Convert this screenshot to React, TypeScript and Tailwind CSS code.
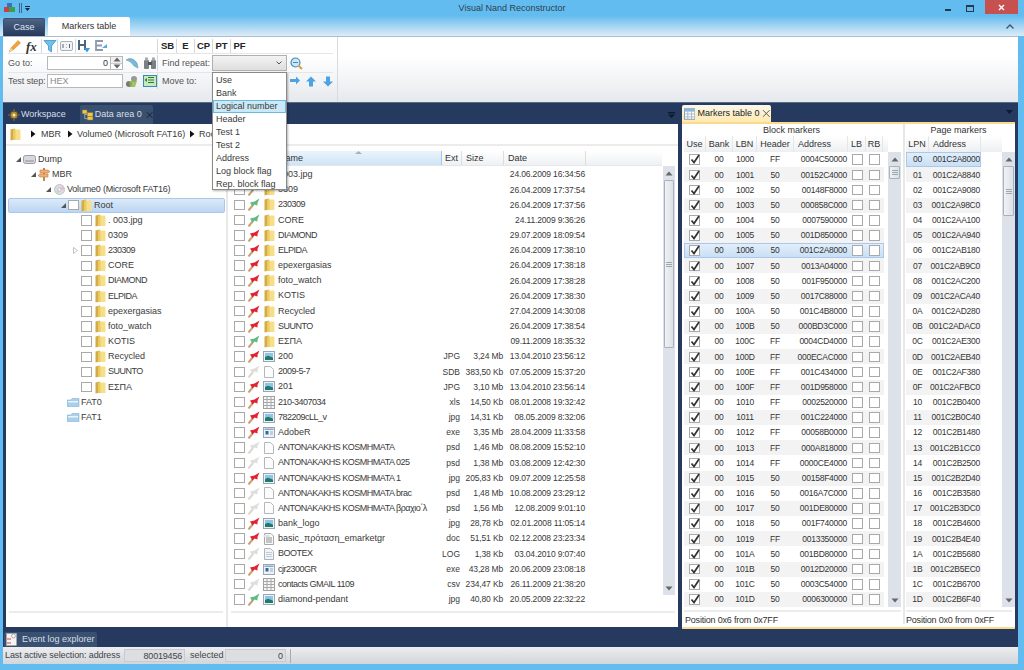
import React from "react";

type PinC = "r" | "g" | "w";
const Pin = ({ c }: { c: PinC }) => {
  const fill = c === "r" ? "#e4212f" : c === "g" ? "#5fbb82" : "#dedede";
  const st = c === "w" ? "#dcd8cc" : "#c9a070";
  return (
    <svg width="13" height="13" viewBox="0 0 13 13" className="shrink-0">
      <path d="M1.5 12.5 L6 7" stroke={st} strokeWidth="2" />
      <path d="M3 4.5 L7.5 3.5 L12.5 0.5 L10.5 5 L10.5 7.5 L7.5 6.5 L5.5 8.5 Z" fill={fill} />
    </svg>
  );
};
const Folder = () => (
  <svg width="11" height="13" viewBox="0 0 11 13" className="shrink-0">
    <path d="M0.5 1.5 L5 0.5 L5 11.5 L0.5 12.5 Z" fill="#d3ac48" />
    <rect x="3.5" y="1.5" width="7" height="10.5" rx="0.5" fill="#f7df8a" />
    <rect x="3.5" y="1.5" width="2" height="10.5" fill="#eccb60" />
  </svg>
);
const ImgIcon = () => (
  <svg width="12" height="11" viewBox="0 0 12 11" className="shrink-0">
    <rect x="0.5" y="0.5" width="11" height="10" fill="#eef2f6" stroke="#9aa6b2" />
    <rect x="2" y="2" width="8" height="4" fill="#8fc4e8" />
    <path d="M2 9 V6 L5 4.8 L10 6.5 V9 Z" fill="#1f7a6a" />
  </svg>
);
const DocIcon = () => (
  <svg width="10" height="12" viewBox="0 0 10 12" className="shrink-0">
    <path d="M0.5 0.5 H6.5 L9.5 3.5 V11.5 H0.5 Z" fill="#fcfcfc" stroke="#b4b8bc" />
  </svg>
);
const LogIcon = () => (
  <svg width="10" height="12" viewBox="0 0 10 12" className="shrink-0">
    <path d="M0.5 0.5 H6.5 L9.5 3.5 V11.5 H0.5 Z" fill="#f0f3f7" stroke="#aab4c0" />
    <path d="M2 4.5 H8 M2 6.5 H8 M2 8.5 H8" stroke="#c5ccd5" />
  </svg>
);
const WordIcon = () => (
  <svg width="12" height="12" viewBox="0 0 12 12" className="shrink-0">
    <path d="M1.5 0.5 H8 L10.5 3 V11.5 H1.5 Z" fill="#f8f8f8" stroke="#a8a8a8" />
    <path d="M3 5 H9 M3 7 H9 M3 9 H9" stroke="#909090" />
    <rect x="0.5" y="2" width="6" height="2" fill="#dde2e8" />
  </svg>
);
const SheetIcon = () => (
  <svg width="12" height="13" viewBox="0 0 12 13" className="shrink-0">
    <rect x="0.5" y="0.5" width="11" height="12" fill="#f6f6f6" stroke="#a0a0a0" />
    <path d="M0.5 3.5 H11.5 M0.5 6.5 H11.5 M0.5 9.5 H11.5 M4 0.5 V12.5 M8 0.5 V12.5" stroke="#a8a8a8" />
  </svg>
);
const ExeIcon = () => (
  <svg width="12" height="11" viewBox="0 0 12 11" className="shrink-0">
    <rect x="0.5" y="0.5" width="11" height="10" fill="#eef2f6" stroke="#9aa6b2" />
    <rect x="1.5" y="1.5" width="9" height="1.5" fill="#8aa8c8" />
    <rect x="2.5" y="4" width="3" height="3.5" fill="#2c6aa8" />
    <path d="M7 5 H10 M7 7 H10" stroke="#9ab" />
  </svg>
);
const Box = ({ on }: { on?: boolean }) => (
  <span className="relative w-[10.5px] h-[10.5px] border border-[#a9a9a9] bg-white shrink-0 block">
    {on && (
      <svg width="12" height="12" viewBox="0 0 12 12" className="absolute left-[-1px] top-[-2px]">
        <path d="M2.5 6.5 L5 9.5 L10 2" stroke="#333" strokeWidth="1.7" fill="none" />
      </svg>
    )}
  </span>
);
const Tri = () => (
  <svg width="7" height="7" viewBox="0 0 7 7" className="shrink-0">
    <path d="M6 1 V6 H1 Z" fill="#555" />
  </svg>
);
const TriR = () => (
  <svg width="6" height="8" viewBox="0 0 6 8" className="shrink-0">
    <path d="M1 0.5 L5.5 4 L1 7.5 Z" fill="#111" />
  </svg>
);
const SbUp = () => (
  <svg width="8" height="5" viewBox="0 0 8 5"><path d="M4 0.5 L7.5 4.5 H0.5 Z" fill="#666" /></svg>
);
const SbDown = () => (
  <svg width="8" height="5" viewBox="0 0 8 5"><path d="M4 4.5 L7.5 0.5 H0.5 Z" fill="#666" /></svg>
);

const Scrollbar = ({ thumbH, thumbTop, w }: { thumbH: number; thumbTop: number; w: string }) => (
  <div className={`${w} self-stretch bg-[#dde2ea] flex flex-col items-center shrink-0`}>
    <div className="h-[14px] flex items-center justify-center shrink-0"><SbUp /></div>
    <div className="flex-1 w-full relative">
      <div
        className="absolute left-[1px] right-[1px] border border-[#a8b2bf] rounded-[1px] bg-gradient-to-r from-[#f0f2f5] to-[#dde0e5] flex items-center justify-center"
        style={{ height: thumbH, top: thumbTop }}
      >
        <div className="w-[6px] h-[5px] border-y border-[#9aa] relative">
          <div className="absolute top-[1px] left-0 right-0 h-[1px] bg-[#9aa]" />
        </div>
      </div>
    </div>
    <div className="h-[14px] flex items-center justify-center shrink-0"><SbDown /></div>
  </div>
);

type F = [string, PinC, string, string, string, string];
const files: F[] = [
  [". 003.jpg", "g", "f", "", "", "24.06.2009 16:34:56"],
  ["0309", "g", "f", "", "", "26.04.2009 17:37:54"],
  ["230309", "g", "f", "", "", "26.04.2009 17:37:56"],
  ["CORE", "g", "f", "", "", "24.11.2009 9:36:26"],
  ["DIAMOND", "r", "f", "", "", "29.07.2009 18:09:54"],
  ["ELPIDA", "r", "f", "", "", "26.04.2009 17:38:10"],
  ["epexergasias", "r", "f", "", "", "26.04.2009 17:38:18"],
  ["foto_watch", "r", "f", "", "", "26.04.2009 17:38:28"],
  ["KOTIS", "r", "f", "", "", "26.04.2009 17:38:30"],
  ["Recycled", "r", "f", "", "", "27.04.2009 14:30:08"],
  ["SUUNTO", "r", "f", "", "", "26.04.2009 17:38:54"],
  ["ΕΣΠΑ", "g", "f", "", "", "09.11.2009 18:35:32"],
  ["200", "r", "i", "JPG", "3,24 Mb", "13.04.2010 23:56:12"],
  ["2009-5-7", "w", "d", "SDB", "383,50 Kb", "07.05.2009 15:37:20"],
  ["201", "r", "i", "JPG", "3,10 Mb", "13.04.2010 23:56:14"],
  ["210-3407034", "r", "s", "xls", "14,50 Kb", "08.01.2008 19:32:42"],
  ["782209cLL_v", "r", "i", "jpg", "14,31 Kb", "08.05.2009 8:32:06"],
  ["AdobeR", "r", "e", "exe", "3,35 Mb", "28.04.2009 11:33:58"],
  ["ANTONAKAKHS KOSMHMATA", "w", "d", "psd", "1,46 Mb", "08.08.2009 15:52:10"],
  ["ANTONAKAKHS KOSMHMATA 025", "w", "d", "psd", "1,38 Mb", "03.08.2009 12:42:30"],
  ["ANTONAKAKHS KOSMHMATA 1", "r", "i", "jpg", "205,83 Kb", "09.07.2009 12:25:58"],
  ["ANTONAKAKHS KOSMHMATA brac", "w", "d", "psd", "1,48 Mb", "10.08.2009 23:29:12"],
  ["ANTONAKAKHS KOSMHMATA βραχιο΄λ", "w", "d", "psd", "1,56 Mb", "12.08.2009 9:01:10"],
  ["bank_logo", "r", "i", "jpg", "28,78 Kb", "02.01.2008 11:05:14"],
  ["basic_πρόταση_emarketgr", "r", "w", "doc", "51,51 Kb", "02.12.2008 23:23:34"],
  ["BOOTEX", "w", "l", "LOG", "1,38 Kb", "03.04.2010 9:07:40"],
  ["cjr2300GR", "r", "e", "exe", "43,28 Mb", "20.06.2009 23:08:18"],
  ["contacts GMAIL 1109", "w", "s", "csv", "234,47 Kb", "26.11.2009 21:38:20"],
  ["diamond-pendant", "g", "i", "jpg", "40,80 Kb", "20.05.2009 22:32:22"],
];
const fileIcon = (k: string) =>
  k === "f" ? <Folder /> : k === "i" ? <ImgIcon /> : k === "d" ? <DocIcon /> : k === "s" ? <SheetIcon /> : k === "e" ? <ExeIcon /> : k === "w" ? <WordIcon /> : <LogIcon />;
const capsTrack = (s: string) =>
  s.replace(/[^A-Z0-9]/g, "").length >= 6 ? "tracking-[-0.5px]" : s.includes("GMAIL") ? "tracking-[-0.25px]" : "";

const blocks: [string, string, string][] = [
  ["1000", "FF", "0004C50000"], ["1001", "50", "00152C4000"], ["1002", "50", "00148F8000"], ["1003", "50", "000858C000"],
  ["1004", "50", "0007590000"], ["1005", "50", "001D850000"], ["1006", "50", "001C2A8000"], ["1007", "50", "0013A04000"],
  ["1008", "50", "001F950000"], ["1009", "50", "0017C88000"], ["100A", "50", "001C4B8000"], ["100B", "50", "000BD3C000"],
  ["100C", "FF", "0004CD4000"], ["100D", "FF", "000ECAC000"], ["100E", "FF", "001C434000"], ["100F", "FF", "001D958000"],
  ["1010", "FF", "0002520000"], ["1011", "FF", "001C224000"], ["1012", "FF", "00058B0000"], ["1013", "FF", "000A818000"],
  ["1014", "FF", "0000CE4000"], ["1015", "50", "00158F4000"], ["1016", "50", "0016A7C000"], ["1017", "50", "001DE80000"],
  ["1018", "50", "001F740000"], ["1019", "FF", "0013350000"], ["101A", "50", "001BD80000"], ["101B", "50", "0012D20000"],
  ["101C", "50", "0003C54000"], ["101D", "50", "0006300000"],
];
const pages: [string, string][] = [
  ["00", "001C2A8000"], ["01", "001C2A8840"], ["02", "001C2A9080"], ["03", "001C2A98C0"], ["04", "001C2AA100"], ["05", "001C2AA940"],
  ["06", "001C2AB180"], ["07", "001C2AB9C0"], ["08", "001C2AC200"], ["09", "001C2ACA40"], ["0A", "001C2AD280"], ["0B", "001C2ADAC0"],
  ["0C", "001C2AE300"], ["0D", "001C2AEB40"], ["0E", "001C2AF380"], ["0F", "001C2AFBC0"], ["10", "001C2B0400"], ["11", "001C2B0C40"],
  ["12", "001C2B1480"], ["13", "001C2B1CC0"], ["14", "001C2B2500"], ["15", "001C2B2D40"], ["16", "001C2B3580"], ["17", "001C2B3DC0"],
  ["18", "001C2B4600"], ["19", "001C2B4E40"], ["1A", "001C2B5680"], ["1B", "001C2B5EC0"], ["1C", "001C2B6700"], ["1D", "001C2B6F40"],
];
const treeKids = [". 003.jpg", "0309", "230309", "CORE", "DIAMOND", "ELPIDA", "epexergasias", "foto_watch", "KOTIS", "Recycled", "SUUNTO", "ΕΣΠΑ"];
const menu = ["Use", "Bank", "Logical number", "Header", "Test 1", "Test 2", "Address", "Log block flag", "Rep. block flag"];

const rowH = "h-[15.18px]";

const Drive = () => (
  <svg width="13" height="11" viewBox="0 0 13 11"><rect x="0.5" y="1.5" width="12" height="8" rx="2" fill="#d5d8dc" stroke="#9a9fa5" /><rect x="2" y="6" width="9" height="2" fill="#b0b4b8" /></svg>
);
const Sign = () => (
  <svg width="12" height="13" viewBox="0 0 12 13"><path d="M5 0 H7 V13 H5 Z" fill="#b98a52" /><path d="M2 2 H10 L12 3.5 L10 5 H2 Z" fill="#f0b078" stroke="#c47a3a" strokeWidth="0.6" /><path d="M10 6 H2 L0 7.5 L2 9 H10 Z" fill="#f0b078" stroke="#c47a3a" strokeWidth="0.6" /></svg>
);
const Disc = () => (
  <svg width="11" height="11" viewBox="0 0 11 11"><circle cx="5.5" cy="5.5" r="5" fill="#dcdce4" stroke="#a8a8a8" strokeWidth="0.6" /><path d="M5.5 5.5 L9 1.8 A5 5 0 0 1 10.5 5.5 Z" fill="#e8b8d8" /><path d="M5.5 5.5 L1 8 A5 5 0 0 0 4 10.4 Z" fill="#c0e0c0" /><circle cx="5.5" cy="5.5" r="1.5" fill="#fff" stroke="#999" strokeWidth="0.5" /></svg>
);
const Fat = () => (
  <svg width="13" height="9" viewBox="0 0 13 9"><path d="M0 2 H4 L5 0.5 H12 V8.5 H0 Z" fill="#a8d0ec" stroke="#7aa4c4" strokeWidth="0.5" /><rect x="1" y="3" width="10" height="1.5" fill="#e8f4fc" /></svg>
);

function TreePane() {
  return (
    <div className="w-[222px] shrink-0 flex flex-col border-r-2 border-[#e8e8e8]">
      <div className="pt-[6px] flex flex-col">
        <div className={`${rowH} flex items-center pl-[9px]`}><span className="w-[8px]"><Tri /></span><span className="w-[13px]"><Drive /></span><span className="ml-[2px]">Dump</span></div>
        <div className={`${rowH} flex items-center pl-[24px]`}><span className="w-[8px]"><Tri /></span><span className="w-[12px]"><Sign /></span><span className="ml-[2px]">MBR</span></div>
        <div className={`${rowH} flex items-center pl-[39px]`}><span className="w-[8px]"><Tri /></span><span className="w-[11px] ml-[1px]"><Disc /></span><span className="ml-[2px] tracking-[-0.2px]">Volume0 (Microsoft FAT16)</span></div>
        <div className={`${rowH} flex items-center pl-[51px] ml-[2px] mr-[1px] bg-gradient-to-b from-[#dbe9f8] to-[#bcd6f2] border border-[#a9c8ea] rounded-[2px]`}>
          <span className="w-[7px]"><Tri /></span><span className="ml-[1px]"><Box /></span><span className="ml-[2.5px]"><Folder /></span><span className="ml-[2px]">Root</span>
        </div>
        {treeKids.map((k) => (
          <div key={k} className={`${rowH} flex items-center pl-[75px]`}>
            <Box /><span className="ml-[3px]"><Folder /></span><span className={`ml-[2.5px] ${capsTrack(k)}`}>{k}</span>
            {k === "230309" && <svg width="5" height="7" viewBox="0 0 5 7" className="absolute ml-[-8px]"><path d="M0.5 0.5 L4.5 3.5 L0.5 6.5 Z" fill="#fff" stroke="#aaa" strokeWidth="0.7" /></svg>}
          </div>
        ))}
        {["FAT0", "FAT1"].map((k) => (
          <div key={k} className={`${rowH} flex items-center pl-[61px]`}><Fat /><span className="ml-[1px]">{k}</span></div>
        ))}
      </div>
      <div className="flex-1" />
      <div className="h-[2px] mx-[3px] bg-[#ececec] mb-[14px]" />
    </div>
  );
}

function FileList() {
  return (
    <div className="flex-1 min-w-0 flex flex-col">
      <div className="pl-[4px] pr-[3px] pt-[5px] flex-1 flex min-h-0">
        <div className="flex-1 flex flex-col min-w-0">
          <div className="h-[15px] flex bg-gradient-to-b from-white to-[#eef0f3] border-b border-[#e4e6ea] text-[#333]">
            <div className="w-[210px] relative bg-gradient-to-b from-[#eaf4fc] to-[#cfe4f5] border-r border-[#9fcbe9] flex items-center pl-[47px]">
              Name
              <svg width="7" height="3" viewBox="0 0 7 3" className="absolute top-0 left-[123px]"><path d="M3.5 0 L7 3 H0 Z" fill="#aab0b8" /></svg>
            </div>
            <div className="w-[20px] border-r border-[#ddd] flex items-center pl-[3px]">Ext</div>
            <div className="w-[42px] border-r border-[#ddd] flex items-center pl-[4px]">Size</div>
            <div className="w-[82px] border-r border-[#ddd] flex items-center pl-[4px]">Date</div>
          </div>
          <div className="pt-[1px]">
            {files.map((f) => (
              <div key={f[0]} className={`${rowH} flex items-center`}>
                <span className="ml-[2px]"><Box /></span>
                <span className="ml-[2.5px] w-[13px]"><Pin c={f[1]} /></span>
                <span className="ml-[3px] w-[12px] flex justify-center">{fileIcon(f[2])}</span>
                <span className={`ml-[3px] w-[164px] ${capsTrack(f[0])}`}>{f[0]}</span>
                <span className="w-[18px] text-right text-[8.5px]">{f[3]}</span>
                <span className="w-[43px] text-right text-[8.5px] tracking-[-0.15px]">{f[4]}</span>
                <span className="w-[82px] text-right text-[8.5px] tracking-[-0.15px]">{f[5]}</span>
              </div>
            ))}
          </div>
        </div>
        <div className="flex flex-col w-[12px] ml-[1px] mt-[15px] mb-[16px] shrink-0">
          <Scrollbar w="w-[12px] flex-1" thumbH={168} thumbTop={0} />
        </div>
      </div>
      <div className="h-[2px] mx-[3px] bg-[#ececec] mb-[14px]" />
    </div>
  );
}

const Col = ({ w, c, children }: { w: string; c?: string; children?: React.ReactNode }) => (
  <div className={`${w} h-full border-r border-[#e6e6e6] flex items-center ${c ?? "justify-center"}`}>{children}</div>
);

function Markers() {
  return (
    <div className="w-[333px] shrink-0 flex flex-col pb-[2px]">
      <div className="h-[18px] flex items-end justify-between">
        <div className="w-[89px] h-[17px] bg-gradient-to-b from-[#fbf7ec] to-[#ffe9ae] flex items-center pl-[2px] gap-[1px] rounded-t-[2px]">
          <svg width="12" height="12" viewBox="0 0 12 12"><rect x="0.5" y="0.5" width="11" height="11" fill="#fff" stroke="#7a9ab8" /><rect x="0.5" y="0.5" width="11" height="3" fill="#8ab8dc" /><path d="M0.5 6 H11.5 M0.5 9 H11.5 M4 3 V11.5 M8 3 V11.5" stroke="#a8b8c8" /></svg>
          <span className="text-[#222] ml-[1px]">Markers table 0</span>
          <svg width="9" height="9" viewBox="0 0 9 9" className="ml-[2px]"><path d="M1 1 L8 8 M8 1 L1 8" stroke="#555" strokeWidth="1" /></svg>
        </div>
        <svg width="7" height="4" viewBox="0 0 7 4" className="mb-[8px] mr-[2px]"><path d="M0 0 H7 L3.5 4 Z" fill="#0e1a2e" /></svg>
      </div>
      <div className="flex-1 bg-[#fff] border-t-2 border-b-2 border-[#fbd98f] flex min-h-0 text-[#333]">
        <div className="w-[221px] shrink-0 flex flex-col pl-[2px]">
          <div className="h-[12px] w-[215px] text-center leading-[12px]">Block markers</div>
          <div className="h-[16px] w-[204px] flex bg-gradient-to-b from-white to-[#edeff2]">
            <Col w="w-[22px]">Use</Col>
            <Col w="w-[27px]">Bank</Col>
            <Col w="w-[24px]">LBN</Col>
            <Col w="w-[37px]">Header</Col>
            <Col w="w-[54px]" c="pl-[4px]">Address</Col>
            <Col w="w-[18px]">LB</Col>
            <Col w="w-[17px]">RB</Col>
          </div>
          <div className="flex flex-1 min-h-0">
            <div className="w-[200px] shrink-0 text-[8.5px] tracking-[-0.25px]">
              {blocks.map((b, i) => {
                const sel = i === 6;
                return (
                  <div key={b[0]} className={`${rowH} flex items-center ${sel ? "bg-gradient-to-b from-[#e4f0fb] to-[#c7def5] outline outline-1 outline-[#a9c8ea] -outline-offset-1" : i % 2 ? "bg-[#f3f3f3]" : ""}`}>
                    <span className="ml-[5px]"><Box on /></span>
                    <span className="w-[30px] text-center ml-[4.5px]">00</span>
                    <span className="w-[22px] text-center">{b[0]}</span>
                    <span className="w-[38px] text-center">{b[1]}</span>
                    <span className="w-[53px] text-right">{b[2]}</span>
                    <span className="ml-[5px]"><Box /></span>
                    <span className="ml-[6.5px]"><Box /></span>
                  </div>
                );
              })}
            </div>
            <div className="ml-[4px] flex flex-col w-[13px] shrink-0 mb-[3px]">
              <Scrollbar w="w-[13px] flex-1" thumbH={13} thumbTop={0} />
            </div>
          </div>
          <div className="h-[2px] w-[217px] bg-[#ececec]" />
          <div className="h-[15px] leading-[17px] pl-[1px] tracking-[-0.2px]">Position 0x6 from 0x7FF</div>
        </div>
        <div className="w-[2px] bg-[#e8e8e8] shrink-0 mb-[3px]" />
        <div className="flex-1 flex flex-col pl-[1px] min-w-0">
          <div className="h-[12px] w-[105px] text-center leading-[12px]">Page markers</div>
          <div className="h-[16px] w-[96px] flex bg-gradient-to-b from-white to-[#edeff2]">
            <Col w="w-[23px]">LPN</Col>
            <Col w="w-[52px]" c="pl-[4px]">Address</Col>
          </div>
          <div className="flex flex-1 min-h-0">
            <div className="w-[75px] shrink-0 text-[8.5px] tracking-[-0.25px]">
              {pages.map((p, i) => (
                <div key={p[0]} className={`${rowH} flex items-center ${i === 0 ? "bg-gradient-to-b from-[#e4f0fb] to-[#c7def5] outline outline-1 outline-[#a9c8ea] -outline-offset-1" : i % 2 === 1 ? "bg-[#f3f3f3]" : ""}`}>
                  <span className="w-[23px] text-center">{p[0]}</span>
                  <span className="w-[51px] text-right">{p[1]}</span>
                </div>
              ))}
            </div>
            <div className="ml-[21px] flex flex-col w-[13px] shrink-0 mb-[3px]">
              <Scrollbar w="w-[13px] flex-1" thumbH={50} thumbTop={0} />
            </div>
          </div>
          <div className="h-[2px] mr-[3px] bg-[#ececec]" />
          <div className="h-[15px] leading-[17px] tracking-[-0.2px]">Position 0x0 from 0xFF</div>
        </div>
      </div>
    </div>
  );
}

const Sep = ({ h = "h-[14px]" }: { h?: string }) => <div className={`w-[1px] ${h} bg-[#d5d8dc] shrink-0`} />;

function Ribbon() {
  return (
    <div className="h-[66px] bg-gradient-to-b from-white from-30% to-[#e6e9ed] border-t border-[#aebccb] flex text-[#555] relative">
      <div className="w-[335px] border-r border-[#d8dbe0] pl-[5px] pt-[2px] flex flex-col">
        <div className="h-[15px] flex items-center border-b border-[#e4e6e9] w-[325px]">
          <div className="w-[149px] flex items-center">
            <svg width="14" height="14" viewBox="0 0 14 14"><path d="M1 13 L3 9 L10 1.5 L12.5 4 L5 11 Z" fill="#f2a33c" stroke="#c87a20" strokeWidth="0.5" /><path d="M1 13 L3 9 L5 11 Z" fill="#f5d8a8" /></svg>
            <span className="ml-[4px] w-[15px] font-bold italic text-[13px] leading-none text-[#333] [font-family:'Liberation_Serif',serif]">fx</span>
            <Sep />
            <svg width="14" height="14" viewBox="0 0 14 14" className="ml-[1px]"><path d="M1 1.5 H13 L8.5 7 V13 L5.5 11 V7 Z" fill="#6cc0ec" stroke="#3288c0" strokeWidth="0.7" /></svg>
            <Sep />
            <svg width="13" height="12" viewBox="0 0 13 12" className="ml-[2px]"><rect x="0.5" y="1.5" width="12" height="9" rx="1.5" fill="#f2f4f6" stroke="#a8b0b8" /><path d="M3 4 V8 M6.5 4.5 V5 M6.5 7 V7.5 M9.5 4 V8" stroke="#667" /></svg>
            <span className="ml-[2px]"><Sep /></span>
            <svg width="15" height="14" viewBox="0 0 15 14" className="ml-[1px]"><path d="M2 1 V11 M8 1 V11 M2 6 H8" stroke="#4a6484" strokeWidth="2" /><path d="M7 9 H13 L10 13.5 Z" fill="#3a9ae0" /></svg>
            <svg width="15" height="14" viewBox="0 0 15 14" className="ml-[2px]"><path d="M9 2 H2 V11 H9 M2 6.5 H8" stroke="#8a9cb0" strokeWidth="1.8" fill="none" /><path d="M8 9 L13 5 L13 9 Z" fill="#60a8d8" /></svg>
          </div>
          <Sep />
          <div className="flex items-center font-bold text-[#222] text-[9.5px]">
            <span className="w-[17px] text-center ml-[1px]">SB</span><Sep />
            <span className="w-[17px] text-center">E</span><Sep />
            <span className="w-[17px] text-center">CP</span><Sep />
            <span className="w-[17px] text-center">PT</span><Sep />
            <span className="w-[17px] text-center">PF</span>
          </div>
        </div>
        <div className="h-[19px] flex items-center border-b border-[#e4e6e9] w-[325px]">
          <span className="w-[40px] shrink-0">Go to:</span>
          <div className="w-[76px] ml-[-1px] h-[14px] border border-[#b8b8b8] bg-white flex justify-end items-center">
            <span className="pr-[2px] text-[#333]">0</span>
            <div className="w-[12px] h-full border-l border-[#b8b8b8] flex flex-col">
              <div className="flex-1 flex items-center justify-center bg-[#f0f0f0] border-b border-[#ccc]"><SbUp /></div>
              <div className="flex-1 flex items-center justify-center"><SbDown /></div>
            </div>
          </div>
          <svg width="14" height="13" viewBox="0 0 14 13" className="ml-[2px]"><path d="M1 3 Q7 -1 12 6 L13 11 L9 9 Q6 4 1 3 Z" fill="#7ab8d8" stroke="#5a90b0" strokeWidth="0.5" /></svg>
          <svg width="14" height="13" viewBox="0 0 14 13" className="ml-[4px]"><rect x="1" y="3" width="5" height="9" rx="1" fill="#7a8088" /><rect x="8" y="3" width="5" height="9" rx="1" fill="#7a8088" /><rect x="2" y="0.5" width="3" height="3" fill="#a8acb0" /><rect x="9" y="0.5" width="3" height="3" fill="#a8acb0" /><rect x="5" y="5" width="4" height="3" fill="#555" /></svg>
          <Sep h="h-[16px]" />
          <span className="ml-[4px] w-[50px]">Find repeat:</span>
          <div className="w-[75px] h-[16px] mb-[1px] border border-[#b0b0b0] bg-gradient-to-b from-[#f4f4f4] to-[#dedede] flex items-center justify-end pr-[4px]">
            <svg width="6" height="4" viewBox="0 0 6 4"><path d="M0.5 0.5 L3 3 L5.5 0.5" stroke="#555" fill="none" /></svg>
          </div>
          <svg width="13" height="13" viewBox="0 0 13 13" className="ml-[3px]"><circle cx="5.5" cy="5.5" r="4.5" fill="#cfe6f5" stroke="#4a8ab8" strokeWidth="1.2" /><path d="M3 5.5 H8" stroke="#4a8ab8" /><path d="M8.5 8.5 L12 12" stroke="#d8a040" strokeWidth="2" /></svg>
        </div>
        <div className="h-[16px] flex items-center">
          <span className="w-[40px] shrink-0 tracking-[-0.1px]">Test step:</span>
          <div className="w-[76px] ml-[-1px] h-[14px] border border-[#b8b8b8] bg-white flex items-center pl-[2px] text-[#8a8a8a]">HEX</div>
          <svg width="14" height="13" viewBox="0 0 14 13" className="ml-[2px]"><circle cx="4" cy="9" r="3" fill="#777" /><circle cx="9" cy="4" r="3" fill="#999" /><path d="M4 6 L12 6 L10 12 L5 12 Z" fill="#8ab840" opacity="0.8" /></svg>
          <svg width="14" height="12" viewBox="0 0 14 12" className="ml-[4px]"><rect x="0.5" y="0.5" width="13" height="11" fill="#c8e8c0" stroke="#3a8ab8" /><path d="M5 2.5 H11 M5 5 H11 M5 7.5 H11" stroke="#2a7a3a" /><path d="M1.5 5 L4 3 V7 Z" fill="#2a8a4a" /></svg>
          <Sep h="h-[16px]" />
          <span className="ml-[4px] w-[124px]">Move to:</span>
          <div className="flex items-center ml-[3px] gap-[6px]">
            {["M1 3 H7 V0.5 L11 4.5 L7 8.5 V6 H1 Z", "M5 0.5 L10 5.5 H7 V10.5 H3 V5.5 H0 Z", "M5 10.5 L10 5.5 H7 V0.5 H3 V5.5 H0 Z"].map((d) => (
              <svg key={d} width="11" height="11" viewBox="0 0 11 11"><path d={d} fill="#4ba3e3" /></svg>
            ))}
          </div>
        </div>
      </div>
      <div className="absolute left-[209px] top-[35px] w-[75px] h-[118px] bg-white border border-[#8a8a8a] shadow-[1px_1px_2px_rgba(0,0,0,0.3)] z-10 pt-[1px] text-[#3a3a3a]">
        {menu.map((m) => (
          <div key={m} className={`h-[13px] leading-[13px] pl-[3px] ${m === "Logical number" ? "bg-[#cbe8f6] outline outline-1 outline-[#6cb8e0] -outline-offset-1" : ""}`}>{m}</div>
        ))}
      </div>
    </div>
  );
}

export default function App() {
  return (
    <div className="w-[1024px] h-[670px] overflow-hidden bg-[#63bcef] flex flex-col [font-family:'Liberation_Sans',sans-serif] text-[9px] leading-none text-[#3c3c3c] whitespace-nowrap">
      <div className="h-[16px] shrink-0 flex items-center relative">
        <svg width="12" height="10" viewBox="0 0 12 10" className="ml-[4px]"><rect x="3" y="0" width="5" height="5" fill="#3b6fc0" /><rect x="0" y="4" width="6" height="5" fill="#c84040" /><rect x="5" y="4" width="6" height="5" fill="#3aa048" /></svg>
        <div className="w-[1px] h-[10px] bg-[#3a6a90] ml-[3px]" />
        <div className="w-[1px] h-[10px] bg-[#3a6a90] ml-[1px]" />
        <svg width="5" height="5" viewBox="0 0 5 5" className="ml-[3px]"><path d="M0 0 H5 V1 H0 Z M0 2 H5 L2.5 5 Z" fill="#1a2a3a" /></svg>
        <div className="flex-1 text-center text-[#2e3f50] pl-[49px]">Visual Nand Reconstructor</div>
        <div className="w-[10px] h-[3px] mr-[11px] mt-[3px] flex items-end"><div className="w-[6px] h-[2px] bg-[#26394c]" /></div>
        <div className="w-[8px] h-[7px] border border-[#26394c] border-t-2 mr-[11px]" />
        <div className="w-[33px] h-[14px] self-start bg-[#c75050] flex items-center justify-center mr-[6px]">
          <svg width="7" height="7" viewBox="0 0 7 7"><path d="M1 1 L6 6 M6 1 L1 6" stroke="#fff" strokeWidth="1.4" /></svg>
        </div>
      </div>
      <div className="h-[20px] shrink-0 flex items-end bg-gradient-to-b from-[#63bcef] to-[#dcecf7] pl-[3px] pr-[10px]">
        <div className="w-[42px] h-[18px] rounded-t-[2px] bg-gradient-to-b from-[#4e6484] to-[#25395c] border-t border-x border-[#3a5070] flex items-center justify-center text-[#dfe6ee]">Case</div>
        <div className="ml-[3px] w-[82px] h-[19px] bg-white rounded-t-[2px] flex items-center justify-center text-[#333]">Markers table</div>
        <div className="flex-1" />
        <svg width="8" height="5" viewBox="0 0 8 5" className="mb-[7px]"><path d="M0.5 4.5 L4 1 L7.5 4.5" stroke="#45566a" strokeWidth="1.4" fill="none" /></svg>
      </div>
      <div className="ml-[3px] mr-[6px] shrink-0"><Ribbon /></div>
      <div className="ml-[3px] mr-[6px] flex-1 min-h-0 bg-[#253a5e] flex gap-[4px] pl-[3px] pt-[1px] border-t border-[#5a6c84]">
        <div className="w-[672px] shrink-0 flex flex-col pb-[4px]">
          <div className="h-[20px] flex items-end text-[#d8dfe8]">
            <div className="w-[74px] h-[19px] flex items-center pl-[2px]">
              <svg width="12" height="12" viewBox="0 0 12 12"><circle cx="6" cy="6" r="4" fill="#a88a40" stroke="#5a4a20" /><circle cx="6" cy="6" r="1.5" fill="#ffe8a0" /><path d="M6 0 V2 M6 10 V12 M0 6 H2 M10 6 H12" stroke="#8a7030" /></svg>
              <span className="ml-[1px]">Workspace</span>
            </div>
            <div className="w-[73px] h-[19px] bg-[#3a5070] flex items-center pl-[2px] rounded-t-[2px]">
              <svg width="13" height="12" viewBox="0 0 13 12"><rect x="0.5" y="0.5" width="5" height="4" fill="#f0c850" stroke="#a88a20" strokeWidth="0.5" /><rect x="6" y="3.5" width="6" height="4" fill="#f0c850" stroke="#a88a20" strokeWidth="0.5" /><rect x="6" y="8" width="6" height="3.5" fill="#f0c850" stroke="#a88a20" strokeWidth="0.5" /><path d="M3 4.5 V10 H6 M3 5.5 H6" stroke="#e0e0e0" strokeWidth="0.6" fill="none" /></svg>
              <span className="ml-[1px]">Data area 0</span>
              <svg width="8" height="8" viewBox="0 0 8 8" className="ml-[4px]"><path d="M1 1 L7 7 M7 1 L1 7" stroke="#101a2a" strokeWidth="1" /></svg>
            </div>
            <div className="flex-1" />
            <svg width="7" height="6" viewBox="0 0 7 6" className="mb-[6px] mr-[3px]"><path d="M0 0 H7 V1.5 H0 Z M0 2.5 H7 L3.5 6 Z" fill="#0e1a2e" /></svg>
          </div>
          <div className="flex-1 min-h-0 bg-white flex flex-col text-[#3a3a3a]">
            <div className="h-[22px] shrink-0 border-b-2 border-[#ececec] flex items-center pl-[4px]">
              <span className="w-[11px]"><Folder /></span>
              <span className="ml-[9px]"><TriR /></span>
              <span className="ml-[5px] w-[26px]">MBR</span>
              <TriR />
              <span className="ml-[4px] w-[112px]">Volume0 (Microsoft FAT16)</span>
              <TriR />
              <span className="ml-[4px]">Root</span>
            </div>
            <div className="flex-1 min-h-0 flex">
              <TreePane />
              <FileList />
            </div>
          </div>
        </div>
        <Markers />
      </div>
      <div className="ml-[3px] mr-[6px] h-[16px] shrink-0 bg-[#253a5e] flex items-end pl-[1px]">
        <div className="w-[93px] h-[15px] bg-[#3a5070] flex items-center pl-[2px] text-[#d8dfe8] rounded-t-[2px]">
          <svg width="11" height="13" viewBox="0 0 11 13"><rect x="0.5" y="0.5" width="10" height="12" fill="#f4f4f4" stroke="#aaa" strokeWidth="0.5" /><rect x="1" y="5" width="4" height="2" fill="#e89898" /><rect x="1" y="9" width="4" height="2" fill="#e89898" /><circle cx="7.5" cy="3" r="2" fill="none" stroke="#888" strokeWidth="0.6" /></svg>
          <span className="ml-[5px]">Event log explorer</span>
        </div>
      </div>
      <div className="ml-[3px] mr-[6px] h-[17px] shrink-0 bg-gradient-to-b from-[#eceef1] to-[#d2d5da] flex items-center pl-[2px] text-[#444]">
        <span className="w-[117px] tracking-[-0.1px]">Last active selection: address</span>
        <span className="w-[61px] h-[13px] bg-[#dcdee2] border border-[#c8cacf] text-right pr-[2px] leading-[12px] ml-[2px] tracking-[-0.2px]">80019456</span>
        <span className="ml-[5px] w-[35px]">selected</span>
        <span className="w-[61px] h-[13px] bg-[#dcdee2] border border-[#c8cacf] text-right pr-[2px] leading-[12px]">0</span>
        <div className="w-[1px] h-[14px] bg-[#aaa] ml-[4px]" />
      </div>
      <div className="h-[6px] shrink-0" />
    </div>
  );
}
